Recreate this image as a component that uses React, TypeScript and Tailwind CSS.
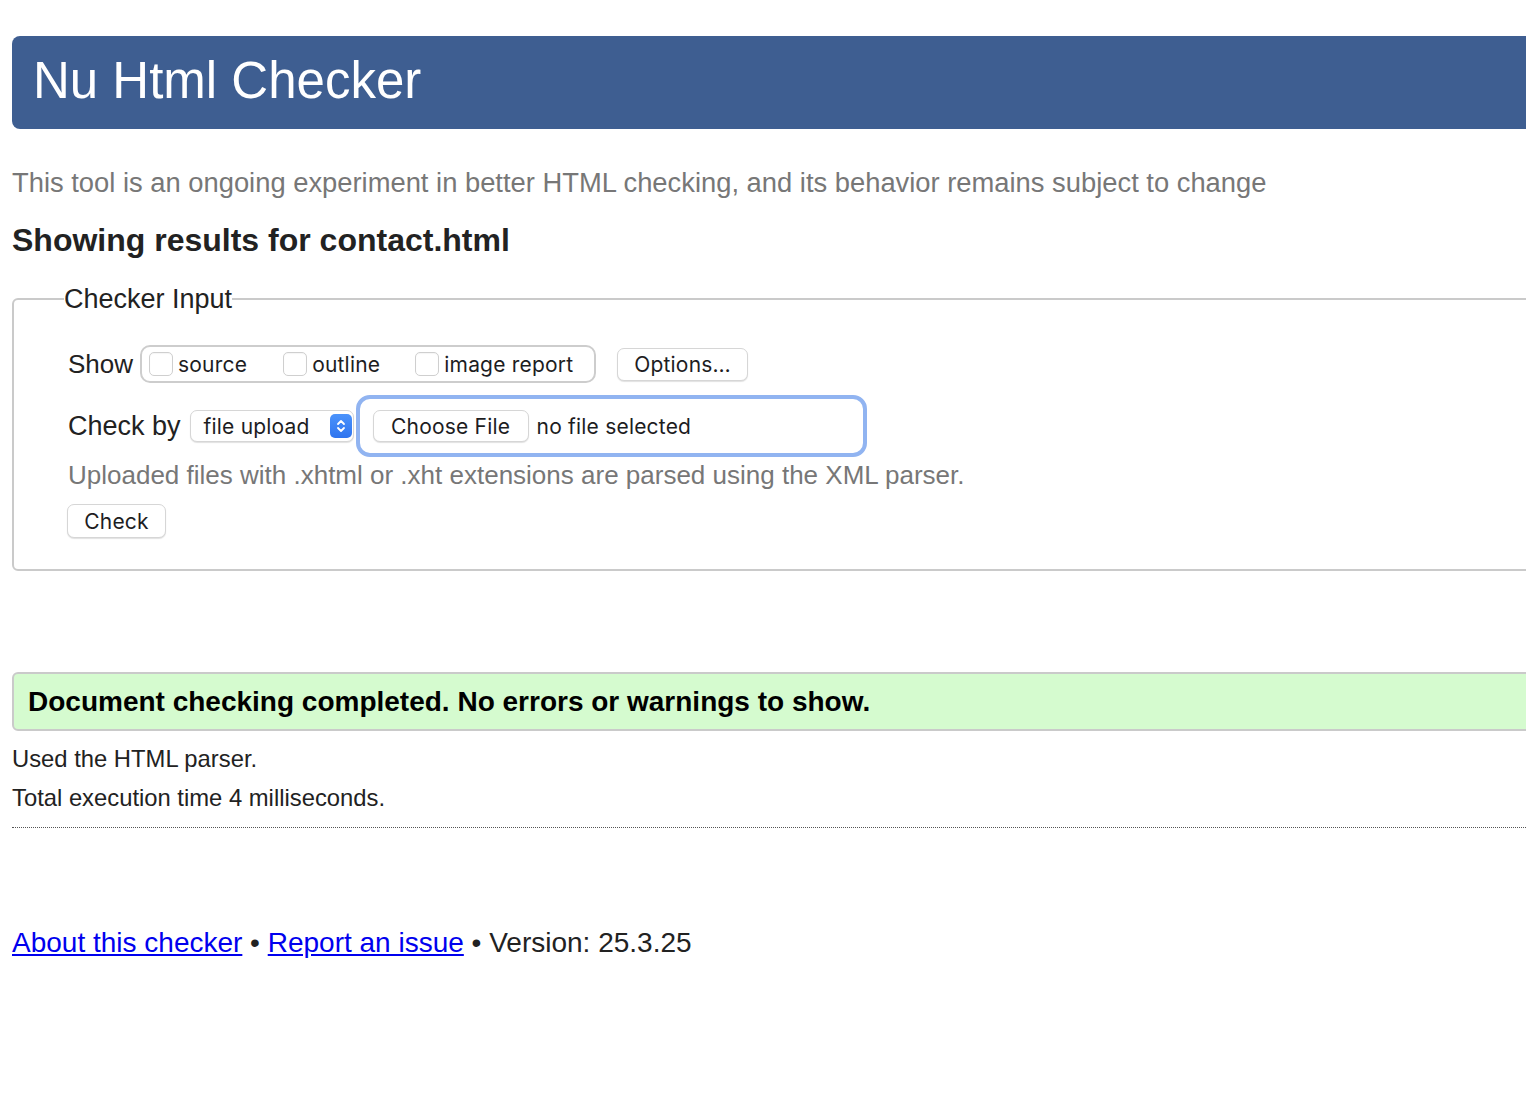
import React from 'react'

// Nu Html Checker – result page (page zoomed, right edge runs past the window)

const sans = "font-['Liberation_Sans',Arial,sans-serif]"
const ui = "font-['Inter','Noto_Sans',sans-serif]"

function Checkbox({ label }: { label: string }) {
  return (
    <label className="flex items-center gap-[5px]">
      <span className="w-6 h-6 rounded-[5px] border border-[#cfcfcf] bg-white shadow-[inset_0_1px_1px_rgba(0,0,0,0.04)]" />
      <span className={`${ui} text-[21px] text-[#1d1d1f] leading-none tracking-[0.2px]`}>{label}</span>
    </label>
  )
}

function MacButton({ children, className = '' }: { children: React.ReactNode; className?: string }) {
  return (
    <button
      className={`${ui} flex items-center justify-center bg-white rounded-[7px] border border-[#d6d6d6] shadow-[0_1px_1px_rgba(0,0,0,0.12)] text-[21px] text-[#1d1d1f] leading-none tracking-[0.2px] ${className}`}
    >
      {children}
    </button>
  )
}

function Stepper() {
  return (
    <span className="w-[22px] h-[24px] rounded-[5px] bg-gradient-to-b from-[#4b93fb] to-[#2f74ef] flex items-center justify-center">
      <svg width="12" height="16" viewBox="0 0 12 16" fill="none" stroke="white" strokeWidth="1.8" strokeLinecap="round" strokeLinejoin="round">
        <path d="M3 6 L6 3 L9 6" />
        <path d="M3 10 L6 13 L9 10" />
      </svg>
    </span>
  )
}

export default function App() {
  return (
    <div className={`w-[1526px] h-[1094px] overflow-hidden bg-white ${sans} text-[#222]`}>
      <div className="ml-3 w-[1540px] pt-[36px]">
        {/* header */}
        <header className="h-[93px] bg-[#3e5e91] rounded-l-[8px] flex items-center pl-[21px]">
          <h1 className="text-white text-[51px] leading-none font-normal -mt-1">Nu Html Checker</h1>
        </header>

        <p className="mt-[38px] text-[#777] text-[27.35px] leading-[32px]">
          This tool is an ongoing experiment in better HTML checking, and its behavior remains subject to change
        </p>

        <h2 className="mt-[22px] text-[32px] leading-[38px] font-bold text-[#222]">Showing results for contact.html</h2>

        {/* checker input */}
        <fieldset className="mt-[25px] border-2 border-[#cacaca] rounded-[6px] pl-[54px] pt-[31px] pb-[31px]">
          <legend className="-ml-1 text-[27px] leading-[30px] text-[#222]">Checker Input</legend>

          <div className="flex items-center h-[38px]">
            <span className="text-[26px] leading-none">Show</span>
            <div className="ml-[7px] h-[38px] w-[456px] rounded-[10px] border-2 border-[#cdcdcd] flex items-center pl-[7px]">
              <Checkbox label="source" />
              <div className="w-[36px]" />
              <Checkbox label="outline" />
              <div className="w-[35px]" />
              <Checkbox label="image report" />
            </div>
            <MacButton className="ml-[21px] w-[131px] h-[33px]">Options…</MacButton>
          </div>

          <div className="flex items-center h-[62px] mt-[12px]">
            <span className="text-[27px] leading-none">Check by</span>
            <div className="ml-[9px] w-[164px] h-[32px] bg-white rounded-[7px] border border-[#d6d6d6] shadow-[0_1px_1px_rgba(0,0,0,0.12)] flex items-center justify-between pl-[13px] pr-[1px]">
              <span className={`${ui} text-[21px] text-[#1d1d1f] leading-none tracking-[0.2px]`}>file upload</span>
              <Stepper />
            </div>
            <div className="ml-[2px] w-[511px] h-[62px] rounded-[14px] border-4 border-[#91b4f1] flex items-center pl-[13px]">
              <MacButton className="w-[156px] h-[32px]">Choose File</MacButton>
              <span className={`${ui} ml-2 text-[21px] text-[#1d1d1f] leading-none tracking-[0.2px]`}>no file selected</span>
            </div>
          </div>

          <p className="mt-[2px] text-[#777] text-[26px] leading-[32px]">
            Uploaded files with .xhtml or .xht extensions are parsed using the XML parser.
          </p>

          <MacButton className="mt-[13px] -ml-[1px] w-[99px] h-[34px]">Check</MacButton>
        </fieldset>

        {/* result */}
        <div className="mt-[101px] h-[59px] bg-[#d5fbcf] border-2 border-[#cacaca] rounded-l-[6px] flex items-center pl-[14px]">
          <p className="text-[28px] font-bold text-black leading-none">
            Document checking completed. No errors or warnings to show.
          </p>
        </div>

        <div className="mt-[8px] text-[23.8px] leading-[39px] text-[#222]">
          <p>Used the HTML parser.</p>
          <p>Total execution time 4 milliseconds.</p>
        </div>

        <hr className="mt-[10px] border-0 border-t border-dotted border-[#555]" />

        <p className="mt-[95px] text-[28px] leading-[39px] text-[#222]">
          <a href="#" className="text-[#0000ee] underline">About this checker</a>
          {' • '}
          <a href="#" className="text-[#0000ee] underline">Report an issue</a>
          {' • Version: 25.3.25'}
        </p>
      </div>
    </div>
  )
}
